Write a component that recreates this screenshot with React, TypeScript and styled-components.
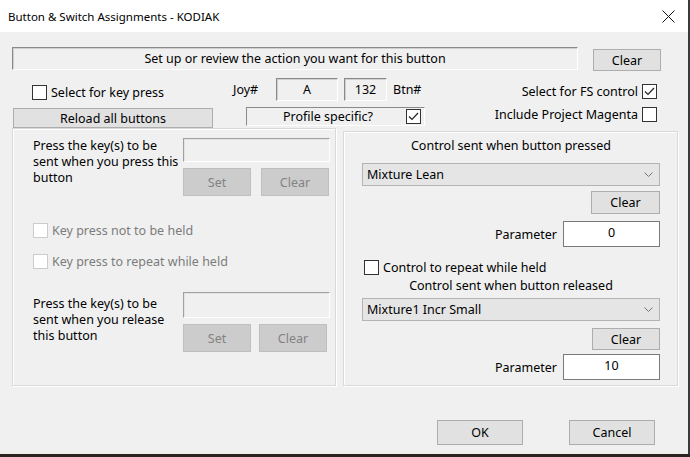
import styled, { createGlobalStyle } from "styled-components";

const GlobalStyle = createGlobalStyle`
  html, body {
    margin: 0;
    padding: 0;
    background: #2b2422;
  }
  body {
    font-family: "Noto Sans", "DejaVu Sans", sans-serif;
    font-size: 12.5px;
    color: #000;
  }
`;

const Window = styled.div`
  width: 688px;
  height: 454px;
  background: #f0f0f0;
  border-right: 2px solid #3a3a3a;
  overflow: hidden;
  display: flex;
  flex-direction: column;
`;

const TitleBar = styled.div`
  height: 32px;
  background: #fff;
  display: flex;
  align-items: center;
  justify-content: space-between;
  padding: 0 13px 0 8px;
  font-size: 11.5px;
`;

const CloseIcon = styled.svg`
  width: 13px;
  height: 13px;
`;

const Body = styled.div`
  flex: 1;
  padding: 0 10px 0 12px;
  display: flex;
  flex-direction: column;
`;

const StatusRow = styled.div`
  display: flex;
  align-items: flex-start;
  margin-top: 15px;
`;

const Sunken = styled.div`
  box-sizing: border-box;
  border-top: 1px solid #8a8a8a;
  border-left: 1px solid #8a8a8a;
  border-right: 1px solid #fff;
  border-bottom: 1px solid #fff;
  box-shadow: inset 1px 1px 0 #cfcfcf;
  display: flex;
  align-items: center;
  justify-content: center;
`;

const StatusBox = styled(Sunken)`
  width: 566px;
  height: 23px;
`;

const Button = styled.div<{ $w: number; $h: number; $disabled?: boolean }>`
  box-sizing: border-box;
  width: ${(p) => p.$w}px;
  height: ${(p) => p.$h}px;
  background: ${(p) => (p.$disabled ? "#cccccc" : "#e1e1e1")};
  border: 1px solid ${(p) => (p.$disabled ? "#bfbfbf" : "#adadad")};
  color: ${(p) => (p.$disabled ? "#838383" : "#000")};
  display: flex;
  align-items: center;
  justify-content: center;
  flex-shrink: 0;
`;

const TopClear = styled(Button)`
  margin: 2px 0 0 15px;
`;

const OptionsRow = styled.div`
  display: grid;
  grid-template-columns: 218px 195px 1fr;
  margin-top: 7px;
  height: 50px;
`;

const LeftOptions = styled.div`
  display: flex;
  flex-direction: column;
`;

const CheckRow = styled.label<{ $disabled?: boolean }>`
  display: flex;
  align-items: center;
  gap: 4px;
  height: 14px;
  white-space: nowrap;
  color: ${(p) => (p.$disabled ? "#7c7c7c" : "#000")};
`;

const KeyPressCheck = styled(CheckRow)`
  margin: 7px 0 0 20px;
`;

const ReloadButton = styled(Button)`
  margin: 9px 0 0 1px;
`;

const MiddleOptions = styled.div`
  display: flex;
  flex-direction: column;
`;

const JoyRow = styled.div`
  display: flex;
  align-items: center;
  height: 23px;
  padding-left: 3px;
`;

const FieldLabel = styled.span<{ $w: number }>`
  width: ${(p) => p.$w}px;
`;

const ValueBox = styled(Sunken)<{ $w: number }>`
  width: ${(p) => p.$w}px;
  height: 23px;
  margin-right: 6px;
`;

const ProfileBox = styled(Sunken)`
  width: 179px;
  height: 19px;
  margin: 6px 0 0 16px;
  justify-content: flex-start;
  padding: 0 3px 0 36px;
  box-shadow: none;
`;

const ProfileText = styled.span`
  flex: 1;
`;

const RightOptions = styled.div`
  display: flex;
  flex-direction: column;
  align-items: flex-end;
  padding-right: 21px;
`;

const FsCheck = styled(CheckRow)`
  margin-top: 6px;
`;

const MagentaCheck = styled(CheckRow)`
  margin-top: 9px;
`;

const Box = styled.span<{ $disabled?: boolean }>`
  box-sizing: border-box;
  width: 15px;
  height: 15px;
  flex-shrink: 0;
  background: #fff;
  border: 1px solid ${(p) => (p.$disabled ? "#cccccc" : "#333")};
  display: flex;
  align-items: center;
  justify-content: center;
`;

const PanelsRow = styled.div`
  display: flex;
  align-items: flex-start;
`;

const Panel = styled.div`
  box-sizing: border-box;
  border: 1px solid #d9d9d9;
  box-shadow: inset 1px 1px 0 #fff, 1px 1px 0 #fff;
  display: flex;
  flex-direction: column;
`;

const LeftPanel = styled(Panel)`
  width: 324px;
  height: 258px;
  padding: 9px 5px 0 20px;
`;

const RightPanel = styled(Panel)`
  width: 336px;
  height: 255px;
  margin-left: 7px;
  margin-top: 3px;
  padding: 6px 17px 0 18px;
`;

const KeyRow = styled.div<{ $top: number }>`
  display: flex;
  margin-top: ${(p) => p.$top}px;
`;

const KeyText = styled.div<{ $offset: number }>`
  width: 152px;
  line-height: 16px;
  margin-top: ${(p) => p.$offset}px;
`;

const KeyControls = styled.div<{ $shift: number }>`
  display: flex;
  flex-direction: column;
  margin-left: ${(p) => p.$shift}px;
`;

const KeyInput = styled(Sunken)<{ $h: number }>`
  width: 147px;
  height: ${(p) => p.$h}px;
  box-shadow: inset 1px 1px 0 #e3e3e3;
  border-top-color: #a0a0a0;
  border-left-color: #a0a0a0;
`;

const KeyButtons = styled.div<{ $gap: number }>`
  display: flex;
  gap: ${(p) => p.$gap}px;
  margin-top: 6px;
`;

const HoldCheck = styled(CheckRow)<{ $top: number }>`
  margin-top: ${(p) => p.$top}px;
  height: 16px;
`;

const PanelHeading = styled.div<{ $top: number }>`
  text-align: center;
  line-height: 16px;
  margin-top: ${(p) => p.$top}px;
`;

const Dropdown = styled.div<{ $top: number }>`
  box-sizing: border-box;
  height: 23px;
  margin-top: ${(p) => p.$top}px;
  background: #e5e5e5;
  border: 1px solid #b4b4b4;
  display: flex;
  align-items: center;
  justify-content: space-between;
  padding: 0 6px 0 4px;
`;

const Chevron = styled.svg`
  width: 9px;
  height: 6px;
`;

const PanelClear = styled(Button)<{ $top: number }>`
  align-self: flex-end;
  margin-top: ${(p) => p.$top}px;
`;

const ParamRow = styled.div<{ $top: number }>`
  display: flex;
  justify-content: flex-end;
  align-items: center;
  gap: 6px;
  margin-top: ${(p) => p.$top}px;
`;

const ParamInput = styled.div`
  box-sizing: border-box;
  width: 97px;
  height: 26px;
  background: #fff;
  border: 1px solid #7a7a7a;
  display: flex;
  align-items: center;
  justify-content: center;
  padding-bottom: 3px;
`;

const RepeatCheck = styled(CheckRow)`
  margin: 13px 0 0 2px;
`;

const Footer = styled.div`
  display: flex;
  justify-content: flex-end;
  gap: 46px;
  margin-top: 34px;
  padding-right: 23px;
`;

function Check({ checked, disabled }: { checked?: boolean; disabled?: boolean }) {
  return (
    <Box $disabled={disabled}>
      {checked && (
        <svg width="11" height="9" viewBox="0 0 11 9">
          <polyline points="1,4.5 4,7.5 10,1" fill="none" stroke="#222" strokeWidth="1.2" />
        </svg>
      )}
    </Box>
  );
}

function Select({ value, top }: { value: string; top: number }) {
  return (
    <Dropdown $top={top}>
      <span>{value}</span>
      <Chevron viewBox="0 0 9 6">
        <polyline points="0.5,0.5 4.5,4.5 8.5,0.5" fill="none" stroke="#777" strokeWidth="1" />
      </Chevron>
    </Dropdown>
  );
}

export default function App() {
  return (
    <>
      <GlobalStyle />
      <Window>
        <TitleBar>
          <span>Button &amp; Switch Assignments - KODIAK</span>
          <CloseIcon viewBox="0 0 13 13">
            <path d="M0.5 0.5 L12.5 12.5 M12.5 0.5 L0.5 12.5" stroke="#111" strokeWidth="1" />
          </CloseIcon>
        </TitleBar>
        <Body>
          <StatusRow>
            <StatusBox>Set up or review the action you want for this button</StatusBox>
            <TopClear $w={68} $h={22}>Clear</TopClear>
          </StatusRow>

          <OptionsRow>
            <LeftOptions>
              <KeyPressCheck>
                <Check />
                Select for key press
              </KeyPressCheck>
              <ReloadButton $w={200} $h={20}>Reload all buttons</ReloadButton>
            </LeftOptions>
            <MiddleOptions>
              <JoyRow>
                <FieldLabel $w={43}>Joy#</FieldLabel>
                <ValueBox $w={62}>A</ValueBox>
                <ValueBox $w={43}>132</ValueBox>
                <span>Btn#</span>
              </JoyRow>
              <ProfileBox>
                <ProfileText>Profile specific?</ProfileText>
                <Check checked />
              </ProfileBox>
            </MiddleOptions>
            <RightOptions>
              <FsCheck>
                Select for FS control
                <Check checked />
              </FsCheck>
              <MagentaCheck>
                Include Project Magenta
                <Check />
              </MagentaCheck>
            </RightOptions>
          </OptionsRow>

          <PanelsRow>
            <LeftPanel>
              <KeyRow $top={0}>
                <KeyText $offset={0}>
                  Press the key(s) to be
                  <br />
                  sent when you press this
                  <br />
                  button
                </KeyText>
                <KeyControls $shift={0}>
                  <KeyInput $h={24} />
                  <KeyButtons $gap={10}>
                    <Button $w={68} $h={28} $disabled>Set</Button>
                    <Button $w={68} $h={28} $disabled>Clear</Button>
                  </KeyButtons>
                </KeyControls>
              </KeyRow>
              <HoldCheck $top={26} $disabled>
                <Check disabled />
                Key press not to be held
              </HoldCheck>
              <HoldCheck $top={15} $disabled>
                <Check disabled />
                Key press to repeat while held
              </HoldCheck>
              <KeyRow $top={23}>
                <KeyText $offset={4}>
                  Press the key(s) to be
                  <br />
                  sent when you release
                  <br />
                  this button
                </KeyText>
                <KeyControls $shift={-1}>
                  <KeyInput $h={26} />
                  <KeyButtons $gap={8}>
                    <Button $w={68} $h={28} $disabled>Set</Button>
                    <Button $w={68} $h={28} $disabled>Clear</Button>
                  </KeyButtons>
                </KeyControls>
              </KeyRow>
            </LeftPanel>

            <RightPanel>
              <PanelHeading $top={0}>Control sent when button pressed</PanelHeading>
              <Select value="Mixture Lean" top={9} />
              <PanelClear $w={69} $h={23} $top={5}>Clear</PanelClear>
              <ParamRow $top={7}>
                <span>Parameter</span>
                <ParamInput>0</ParamInput>
              </ParamRow>
              <RepeatCheck>
                <Check />
                Control to repeat while held
              </RepeatCheck>
              <PanelHeading $top={4}>Control sent when button released</PanelHeading>
              <Select value="Mixture1 Incr Small" top={4} />
              <PanelClear $w={68} $h={22} $top={7}>Clear</PanelClear>
              <ParamRow $top={4}>
                <span>Parameter</span>
                <ParamInput>10</ParamInput>
              </ParamRow>
            </RightPanel>
          </PanelsRow>

          <Footer>
            <Button $w={86} $h={25}>OK</Button>
            <Button $w={86} $h={25}>Cancel</Button>
          </Footer>
        </Body>
      </Window>
    </>
  );
}
